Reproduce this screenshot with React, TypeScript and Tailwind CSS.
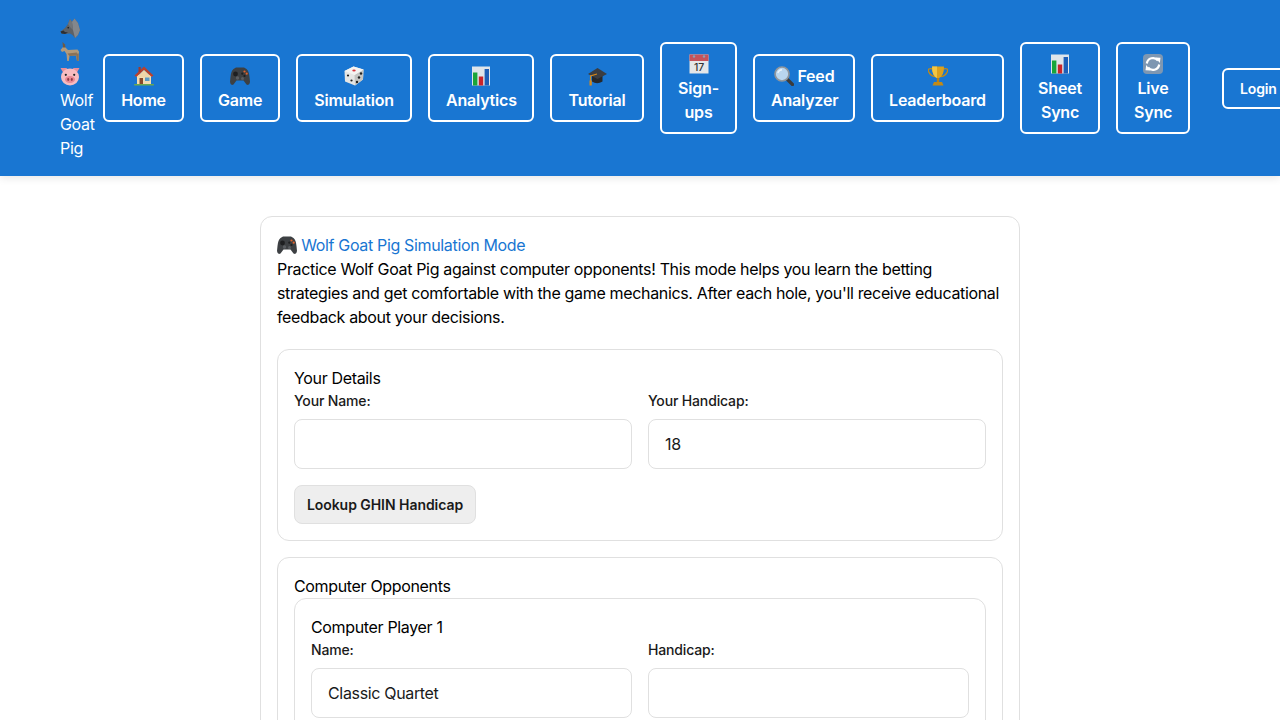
import React from "react";

const Em = ({ children, cls = "w-5 h-5" }: { children: React.ReactNode; cls?: string }) => (
  <svg viewBox="0 0 20 20" className={`inline-block align-[-4px] ${cls}`}>{children}</svg>
);

const Wolf = () => (
  <Em>
    <path d="M0.5 13.5 L5 10 L8 6 L10 1 L12 4 L14.5 0.5 L18 5 L20 12 L18 17 L15 20 L12.5 17 L10 15.5 L5 16 L1.5 15.5 Z" fill="#5d6166" />
    <path d="M12 4 L14.5 0.5 L18 5 L20 12 L18 17 L15 20 L13 12 Z" fill="#83878c" />
    <path d="M8 6 L10 1 L12 4 L13 12 L10 9 Z" fill="#70757a" />
    <path d="M0.5 13.5 L3.5 12.5 L5 14 L8 14.5 L5 16 L1.5 15.5 Z" fill="#2c2e32" />
    <circle cx="8.2" cy="9.8" r="0.8" fill="#191919" />
  </Em>
);
const Goat = () => (
  <Em>
    <path d="M0.5 8 L3 5 L5 5 L8 8 L17.5 7.5 L19 9.5 L18.5 19 L17 19 L16 13.5 L9.5 14 L8.8 19 L7.2 19 L6.5 12 L4.5 9 L2 10 Z" fill="#b29a7b" />
    <path d="M3 5.5 L2.5 0 L5 2.5 L5.5 5.5 Z" fill="#6f5a42" />
    <path d="M7.5 11.5 L17 10.5 L16.5 13.5 L9.5 14 Z" fill="#8a7258" />
    <path d="M16 11.5 L18.8 11.5 L18.5 19 L17 19 Z" fill="#8a7258" />
  </Em>
);
const Pig = () => (
  <Em>
    <path d="M0.5 2 L7 2 L4.5 9 Z M19.5 2 L13 2 L15.5 9 Z" fill="#e98f9b" />
    <ellipse cx="10" cy="11" rx="9" ry="8.5" fill="#f8bcc0" />
    <ellipse cx="10" cy="13.5" rx="5" ry="3.5" fill="#ea8a95" />
    <ellipse cx="8.2" cy="13.5" rx="1" ry="1.4" fill="#8c3a44" />
    <ellipse cx="11.8" cy="13.5" rx="1" ry="1.4" fill="#8c3a44" />
    <circle cx="5.8" cy="8.8" r="1.1" fill="#222" />
    <circle cx="14.2" cy="8.8" r="1.1" fill="#222" />
  </Em>
);
const House = () => (
  <Em>
    <rect x="3" y="9" width="14" height="9.5" fill="#f3dcb2" />
    <path d="M10 0.5 L19.5 9.5 L17.5 11 L10 4 L2.5 11 L0.5 9.5 Z" fill="#b8412e" />
    <path d="M10 4 L17.5 11 L2.5 11 Z" fill="#f0d6a8" />
    <rect x="4.5" y="1" width="2.2" height="5" fill="#a33a2a" />
    <rect x="5.5" y="12" width="3.5" height="6.5" fill="#8a4a2a" />
    <rect x="11" y="11.5" width="4.5" height="3.5" fill="#5b9bc4" />
    <rect x="0" y="18" width="20" height="1.5" rx="0.7" fill="#6aa84f" />
  </Em>
);
const Pad = () => (
  <Em>
    <path d="M3.5 3 L6 1.5 L14 1.5 L16.5 3 Q19 5 19.5 11 L20 16 Q19.5 20 16.5 18.5 L13.5 14.5 L6.5 14.5 L3.5 18.5 Q0.5 20 0 16 L0.5 11 Q1 5 3.5 3 Z" fill="#3d4043" />
    <circle cx="5.5" cy="8" r="2.4" fill="#1e1f21" />
    <circle cx="14.5" cy="5.5" r="1.1" fill="#e2622b" />
    <circle cx="16.7" cy="7.7" r="1.1" fill="#e2622b" />
    <circle cx="12.3" cy="7.7" r="1.1" fill="#1e1f21" />
    <circle cx="14.5" cy="9.9" r="1.1" fill="#1e1f21" />
    <circle cx="7.5" cy="12" r="1.7" fill="#5a5d61" />
    <circle cx="12.5" cy="12.5" r="1.5" fill="#5a5d61" />
  </Em>
);
const Die = () => (
  <Em>
    <path d="M9.5 0.5 L19.5 3.5 L19 13.5 L11 19.5 L1 15.5 L0.5 5 Z" fill="#e6e6e4" />
    <path d="M10.5 9 L19.5 3.5 L19 13.5 L11 19.5 Z" fill="#c4c4c1" />
    <path d="M9.5 0.5 L19.5 3.5 L10.5 9 L0.5 5 Z" fill="#f4f4f2" />
    <ellipse cx="10" cy="4.6" rx="1.7" ry="1" fill="#d9363e" />
    <circle cx="4" cy="9.5" r="1.1" fill="#222" />
    <circle cx="7.5" cy="14.5" r="1.1" fill="#222" />
    <circle cx="13" cy="16" r="1.2" fill="#222" />
    <circle cx="15" cy="11.5" r="1.2" fill="#222" />
    <circle cx="17" cy="7.5" r="1.2" fill="#222" />
  </Em>
);
const Chart = () => (
  <Em>
    <rect x="1" y="0.5" width="18" height="19" fill="#dfe5ea" />
    <rect x="2" y="6.5" width="4.4" height="13" fill="#19a53a" />
    <rect x="7.8" y="10.5" width="4.4" height="9" fill="#c9242b" />
    <rect x="13.6" y="3" width="4.4" height="16.5" fill="#1d5fb8" />
  </Em>
);
const Cap = () => (
  <Em>
    <path d="M5 10 L15.5 10 L15.5 15.5 Q10 19 5 15.5 Z" fill="#26282b" />
    <path d="M10.5 2 L20 8 L10.5 13 L1 8 Z" fill="#3b3d41" />
    <path d="M10 8 L3.5 10 L3.5 15" fill="none" stroke="#d68a1c" strokeWidth="1.1" />
    <path d="M2.5 14.5 L4.8 14.5 L4.8 19.5 L2.5 19.5 Z" fill="#d68a1c" />
  </Em>
);
const Cal = () => (
  <Em>
    <rect x="0.5" y="0.5" width="19" height="19" fill="#e4e6e8" />
    <rect x="0.5" y="0.5" width="19" height="6.5" fill="#c5525a" />
    <circle cx="5" cy="2.5" r="1.2" fill="#8fa0b3" />
    <circle cx="15" cy="2.5" r="1.2" fill="#8fa0b3" />
    <text x="10" y="16.8" textAnchor="middle" fontSize="10.5" fontWeight="500" fill="#333" fontFamily="Inter, sans-serif">17</text>
  </Em>
);
const Mag = () => (
  <Em>
    <path d="M12.5 12.5 L18.5 18.5" stroke="#3b3b3b" strokeWidth="3.2" strokeLinecap="round" />
    <circle cx="8" cy="8" r="7" fill="#b9d6ef" stroke="#8f959b" strokeWidth="1.7" />
    <path d="M3.8 7 Q5 3.8 8 3.8" fill="none" stroke="#eaf4fc" strokeWidth="1.4" />
  </Em>
);
const Trophy = () => (
  <Em>
    <path d="M5 3 Q-1 1.5 0.8 6 Q2.5 10 7 10.5 M15 3 Q21 1.5 19.2 6 Q17.5 10 13 10.5" fill="none" stroke="#c28a16" strokeWidth="1.3" />
    <path d="M4 0.5 L16 0.5 Q16 10 11 12 L9 12 Q4 10 4 0.5 Z" fill="#dca11c" />
    <path d="M9 0.5 L4 0.5 Q4 10 9 12 Z" fill="#f3c642" />
    <rect x="8.8" y="12" width="2.4" height="4" fill="#b98114" />
    <path d="M6 16 L14 16 L15.5 19.5 L4.5 19.5 Z" fill="#c28a16" />
  </Em>
);
const Sync = () => (
  <Em>
    <rect x="0" y="0" width="20" height="20" rx="4" fill="#7e97b2" />
    <path d="M3.8 9.5 A6.3 6.3 0 0 1 15 6.5" fill="none" stroke="#fff" strokeWidth="2.2" />
    <path d="M12.5 3.5 L17.5 3.8 L16.8 9 Z" fill="#fff" />
    <path d="M16.2 10.5 A6.3 6.3 0 0 1 5 13.5" fill="none" stroke="#fff" strokeWidth="2.2" />
    <path d="M7.5 16.5 L2.5 16.2 L3.2 11 Z" fill="#fff" />
  </Em>
);

const NavBtn = ({ icon, label, w }: { icon: React.ReactNode; label: string; w: string }) => (
  <button className={`${w} shrink-0 border-2 border-white rounded-md px-4 py-2 text-white font-semibold text-base leading-6 tracking-[-0.2px] text-center`}>
    {icon} {label}
  </button>
);

const Field = ({ label, value }: { label: string; value?: string }) => (
  <div>
    <label className="block text-sm leading-[21px] font-medium tracking-[-0.15px] text-[#1a1a1a] mb-2">{label}</label>
    <input
      readOnly
      value={value ?? ""}
      className="block w-full h-[50px] border border-[#e0e0e0] rounded-lg px-4 py-3 text-base leading-6 text-[#1a1a1a] bg-white outline-none"
    />
  </div>
);

export default function App() {
  return (
    <div className="h-screen overflow-hidden bg-white text-black font-['Inter',sans-serif] text-base leading-6 tracking-[-0.34px]">
      <header className="h-[176px] bg-[#1976d2] shadow-[0_2px_8px_rgba(0,0,0,0.1)] pl-[60px] flex items-center">
        <div className="w-[35px] shrink-0 mr-2 text-white">
          <Wolf /> <Goat /> <Pig /> Wolf Goat Pig
        </div>
        <nav className="flex items-center gap-4 shrink-0">
          <NavBtn w="w-[81px]" icon={<House />} label="Home" />
          <NavBtn w="w-[80px]" icon={<Pad />} label="Game" />
          <NavBtn w="w-[116px]" icon={<Die />} label="Simulation" />
          <NavBtn w="w-[106px]" icon={<Chart />} label="Analytics" />
          <NavBtn w="w-[94px]" icon={<Cap />} label="Tutorial" />
          <NavBtn w="w-[77px]" icon={<Cal />} label="Sign-ups" />
          <NavBtn w="w-[102px]" icon={<Mag />} label="Feed Analyzer" />
          <NavBtn w="w-[133px]" icon={<Trophy />} label="Leaderboard" />
          <NavBtn w="w-[80px]" icon={<Chart />} label="Sheet Sync" />
          <NavBtn w="w-[74px]" icon={<Sync />} label="Live Sync" />
        </nav>
        <button className="shrink-0 ml-8 border-2 border-white rounded-md px-4 py-2 text-white font-semibold text-sm leading-[21px] tracking-[-0.15px]">
          Login
        </button>
      </header>

      <main className="w-[760px] mx-auto mt-10 border border-[#e0e0e0] rounded-xl p-4">
        <div className="text-[#1976d2]">
          <Pad /> Wolf Goat Pig Simulation Mode
        </div>
        <p className="mb-5">
          Practice Wolf Goat Pig against computer opponents! This mode helps you learn the betting strategies and get
          comfortable with the game mechanics. After each hole, you'll receive educational feedback about your decisions.
        </p>

        <section className="border border-[#e0e0e0] rounded-xl p-4 mb-4">
          <div>Your Details</div>
          <div className="grid grid-cols-2 gap-4">
            <Field label="Your Name:" />
            <Field label="Your Handicap:" value="18" />
          </div>
          <button className="mt-4 block w-[182px] border border-[#e0e0e0] bg-[#eeeeee] rounded-lg py-2 text-sm leading-[21px] font-semibold tracking-[-0.05px] text-[#1a1a1a]">
            Lookup GHIN Handicap
          </button>
        </section>

        <section className="border border-[#e0e0e0] rounded-xl p-4">
          <div>Computer Opponents</div>
          <div className="border border-[#e0e0e0] rounded-xl p-4">
            <div>Computer Player 1</div>
            <div className="grid grid-cols-2 gap-4">
              <Field label="Name:" value="Classic Quartet" />
              <Field label="Handicap:" />
            </div>
          </div>
        </section>
      </main>
    </div>
  );
}
